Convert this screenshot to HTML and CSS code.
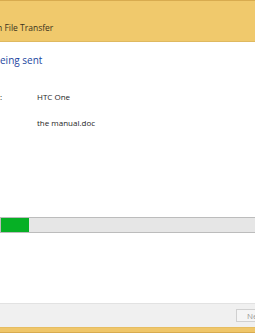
FILE: index.html
```html
<!DOCTYPE html>
<html lang="en">
<head>
    <meta charset="UTF-8">
    <meta name="viewport" content="width=device-width, initial-scale=1.0">
    <title>Bluetooth File Transfer</title>
    <link rel="stylesheet" href="styles.css">
</head>
<body>
  <div class="window">
    <div class="titlebar">
        <p class="caption"><span class="cut">h</span> File Transfer</p>
    </div>
    <div class="content">
        <h1 class="instruction">eing sent</h1>
        <div class="details">
            <p class="label">:</p>
            <p class="value">HTC One</p>
            <p class="label"></p>
            <p class="value">the manual.doc</p>
        </div>
        <div class="progress">
            <div class="progress-fill" style="width: 28px"></div>
        </div>
    </div>
    <div class="footer">
        <button class="btn" disabled>Next</button>
    </div>
    <div class="frame-bottom"></div>
  </div>
</body>
</html>
```

FILE: styles.css
```css
*{
    margin: 0;
    padding: 0;
    box-sizing: border-box;
}
body{
    font-family: "Open Sans", "Noto Sans", sans-serif;
    background: #ffffff;
    overflow: hidden;
}
.window{
    display: flex;
    flex-direction: column;
    height: 333px;
    overflow: hidden;
}
.titlebar{
    height: 42px;
    background: #f0c96c;
    border-top: 1px solid #d8ab4f;
    border-bottom: 1px solid #dfb960;
    box-shadow: 0 1px 0 #fbf1d6;
    padding-top: 21px;
}
.caption{
    font-size: 8.5px;
    line-height: 12px;
    color: #3a3220;
    white-space: nowrap;
}
.cut{
    display: inline-block;
    margin-left: -3px;
}
.content{
    flex: 1;
    background: #ffffff;
    overflow: hidden;
    padding-top: 11px;
}
.instruction{
    font-weight: normal;
    font-size: 10px;
    line-height: 14px;
    color: #2346a0;
}
.details{
    display: grid;
    grid-template-columns: 37px auto;
    grid-row-gap: 14px;
    margin-top: 24px;
    font-size: 8px;
    line-height: 12px;
    color: #1e1e1e;
}
.progress{
    width: 300px;
    height: 16px;
    margin-top: 88px;
    background: #e6e6e6;
    border: 1px solid #bcbcbc;
}
.progress-fill{
    height: 100%;
    background: #06b025;
}
.footer{
    height: 24px;
    background: #f0f0f0;
    border-top: 1px solid #e2e2e2;
    display: flex;
    align-items: center;
    padding-left: 236px;
    overflow: hidden;
}
.btn{
    flex: none;
    width: 50px;
    height: 13px;
    font-family: inherit;
    font-size: 8px;
    line-height: 11px;
    text-align: left;
    padding-left: 10px;
    color: #9a9a9a;
    background: #f5f5f5;
    border: 1px solid #d0d0d0;
}
.frame-bottom{
    height: 6px;
    background: #efc66a;
    border-top: 1px solid #e6bd62;
    border-bottom: 1px solid #d8ab4f;
}
```
